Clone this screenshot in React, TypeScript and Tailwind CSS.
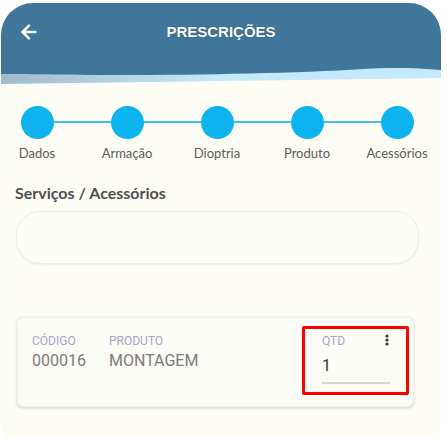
import React from 'react';
import { ArrowLeft } from 'lucide-react';

const steps = ['Dados', 'Armação', 'Dioptria', 'Produto', 'Acessórios'];

const Wave: React.FC = () => (
  <svg width="440" height="20" viewBox="0 0 440 20" className="block">
    <defs>
      <linearGradient id="band" x1="0" x2="1" y1="0" y2="0">
        <stop offset="0" stopColor="#9fbccb" />
        <stop offset="0.25" stopColor="#b2d3e3" />
        <stop offset="0.5" stopColor="#c5e8fb" />
        <stop offset="1" stopColor="#c5e8fb" />
      </linearGradient>
    </defs>
    <path d="M0 0 H440 V12 C300 14 150 16 0 18 Z" fill="url(#band)" />
    <path
      d="M0 0 H440 V4 C420 2 390 1 362 3 C300 7 200 9 120 9 C60 9 20 8 0 8 Z"
      fill="#41769b"
    />
  </svg>
);

const App: React.FC = () => {
  return (
    <div className="w-[447px] h-[438px] bg-white overflow-hidden">
      <div className="ml-[1px] mt-[3px] w-[440px] h-[450px] rounded-[32px] overflow-hidden bg-[#fdfdf5]">
        <div className="h-[63px] bg-[#41769b] flex items-center px-[17px] pb-[5px]">
          <ArrowLeft size={22} strokeWidth={2.8} className="text-white" />
          <div className="flex-1 text-center pr-[22px] text-white font-bold text-[15px] font-['Liberation_Sans',sans-serif] [text-shadow:0_0_1px_rgba(0,40,70,0.8)]">
            PRESCRIÇÕES
          </div>
        </div>
        <Wave />

        <div className="relative mt-[20px] flex gap-[18px] w-[433px]">
          <div className="absolute left-[36px] right-[36px] top-[15px] h-[2px] bg-[#3fc0ee]" />
          {steps.map((s) => (
            <div key={s} className="relative w-[72px] flex flex-col items-center">
              <div className="w-[33px] h-[33px] rounded-full bg-[#0db3ef]" />
              <div className="mt-[6px] text-[13px] leading-[17px] text-[#5b5b5b] font-['Lato',sans-serif] whitespace-nowrap">
                {s}
              </div>
            </div>
          ))}
        </div>

        <div className="mt-[20px] ml-[14px] text-[16px] leading-[22px] font-bold text-[#4f4f4f] font-['Lato',sans-serif]">
          Serviços / Acessórios
        </div>

        <div className="mt-[7px] ml-[15px] w-[403px] h-[53px] rounded-[24px] border border-[#ebede6] bg-[#fdfdf8] shadow-[0_1px_2px_rgba(0,0,0,0.06)]" />

        <div className="mt-[53px] ml-[16px] w-[397px] h-[90px] rounded-[6px] bg-[#fcfcf6] shadow-[0_1px_3px_rgba(0,0,0,0.18)] border border-[#f0f0ea] flex items-start pl-[14px] font-['Roboto',sans-serif]">
          <div className="mt-[16px] w-[77px]">
            <div className="text-[12px] leading-[14px] text-[#a9a2c6]">CÓDIGO</div>
            <div className="mt-[3px] text-[16px] leading-[20px] text-[#7b7b7b]">000016</div>
          </div>
          <div className="mt-[16px]">
            <div className="text-[12px] leading-[14px] text-[#a9a2c6]">PRODUTO</div>
            <div className="mt-[3px] text-[16px] leading-[20px] text-[#7b7b7b]">MONTAGEM</div>
          </div>
          <div className="ml-auto mr-[4px] mt-[8px] w-[107px] h-[69px] border-[3px] border-[#ff0000] rounded-[2px] pl-[17px] pr-[15px]">
            <div className="flex items-start justify-between mt-[5px]">
              <div className="text-[12px] leading-[14px] text-[#a9a2c6]">QTD</div>
              <svg width="4" height="12" viewBox="0 0 4 12" className="mr-[2px]">
                <circle cx="2" cy="2" r="1.6" fill="#333" />
                <circle cx="2" cy="6" r="1.6" fill="#333" />
                <circle cx="2" cy="10" r="1.6" fill="#333" />
              </svg>
            </div>
            <div className="mt-[8px] text-[16px] leading-[20px] text-[#333]">1</div>
            <div className="mt-[6px] h-[2px] w-[68px] bg-[#d5d8d0]" />
          </div>
        </div>
      </div>
    </div>
  );
};

export default App;
